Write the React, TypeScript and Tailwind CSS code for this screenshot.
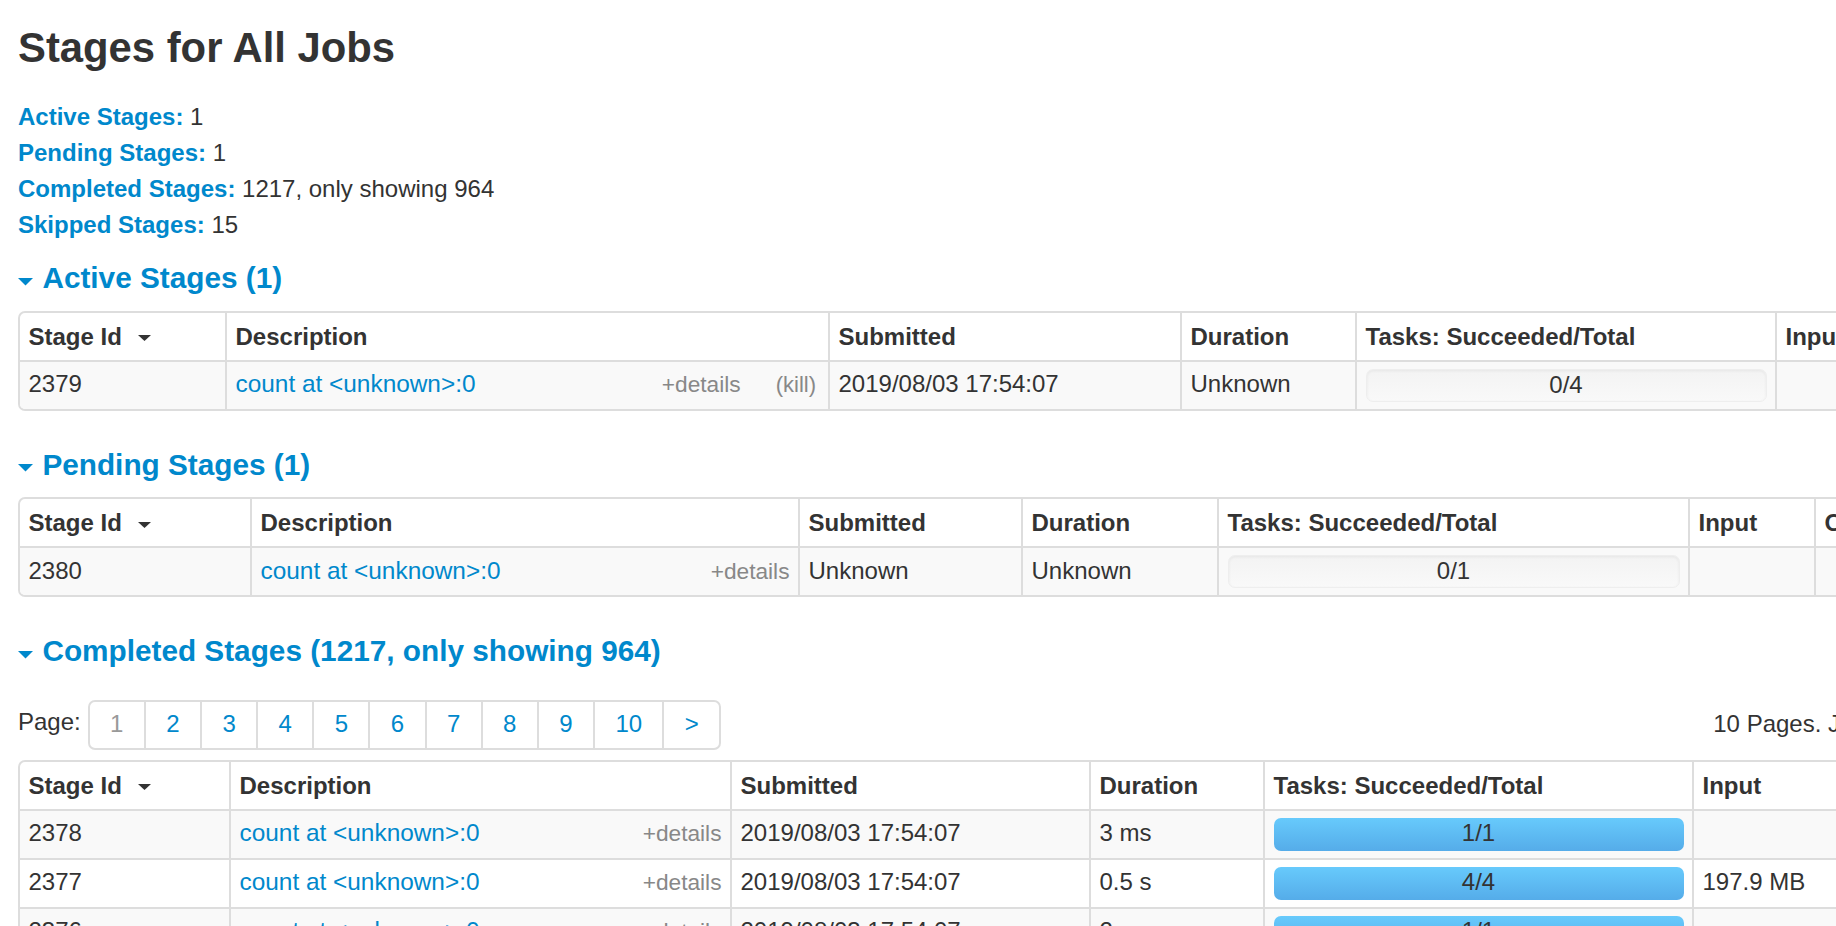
import React from 'react'

type Stage = {
    id: string
    submitted: string
    duration: string
    tasks: string
    done: boolean
    input?: string
    kill?: boolean
}

const headers = ['Stage Id', 'Description', 'Submitted', 'Duration', 'Tasks: Succeeded/Total', 'Input', 'Output']

const activeStages: Stage[] = [
    { id: '2379', submitted: '2019/08/03 17:54:07', duration: 'Unknown', tasks: '0/4', done: false, kill: true },
]

const pendingStages: Stage[] = [
    { id: '2380', submitted: 'Unknown', duration: 'Unknown', tasks: '0/1', done: false },
]

const completedStages: Stage[] = [
    { id: '2378', submitted: '2019/08/03 17:54:07', duration: '3 ms', tasks: '1/1', done: true },
    { id: '2377', submitted: '2019/08/03 17:54:07', duration: '0.5 s', tasks: '4/4', done: true, input: '197.9 MB' },
    { id: '2376', submitted: '2019/08/03 17:54:07', duration: '2 ms', tasks: '1/1', done: true },
]

const pages = ['1', '2', '3', '4', '5', '6', '7', '8', '9', '10', '>']

const Arrow = () => (
    <svg width="15" height="8" viewBox="0 0 15 8" className="mt-[18.5px] mr-[9.4px] shrink-0">
        <polygon points="0,0 15,0 7.5,7.5" fill="#0088cc" />
    </svg>
)

const SortArrow = () => (
    <svg width="13" height="6" viewBox="0 0 13 6" className="mt-[15.3px] ml-[16px] shrink-0">
        <polygon points="0,0 13,0 6.5,6" fill="#333" />
    </svg>
)

const SectionTitle = ({ text, className }: { text: string; className: string }) => (
    <div className={'flex h-[34px] items-start ' + className}>
        <Arrow />
        <a className="mt-[2px] whitespace-nowrap text-[29.75px] font-bold leading-[34px] text-[#0088cc]">{text}</a>
    </div>
)

const Progress = ({ text, done }: { text: string; done: boolean }) => {
    if (done) {
        return (
            <div className="mt-[7px] h-[33px] rounded-[7px] bg-gradient-to-b from-[#67cafc] to-[#55ace9] text-center leading-[29px] text-[#333]">
                {text}
            </div>
        )
    }
    return (
        <div className="mt-[7px] h-[33px] rounded-[7px] border border-[#eeeeee] bg-gradient-to-b from-[#f3f3f3] to-[#f9f9f9] text-center leading-[29px] text-[#333] shadow-[inset_0_1px_3px_rgba(0,0,0,0.06)]">
            {text}
        </div>
    )
}

const StageTable = ({ cols, stages, className }: { cols: string; stages: Stage[]; className: string }) => (
    <div className={'w-max overflow-hidden rounded-[7px] border-2 border-[#dddddd] ' + className}>
        {/* header row */}
        <div className={'grid h-[47px] ' + cols}>
            {headers.map((h, i) => (
                <div
                    key={h}
                    className={'flex items-start whitespace-nowrap px-[8.5px] pt-[7px] font-bold leading-[34px] ' + (i > 0 ? 'border-l-2 border-[#dddddd]' : '')}
                >
                    {h}
                    {i === 0 && <SortArrow />}
                </div>
            ))}
        </div>
        {stages.map((s, r) => (
            <div
                key={s.id}
                className={'grid h-[49px] border-t-2 border-[#dddddd] ' + cols + ' ' + (r % 2 === 0 ? 'bg-[#f9f9f9]' : 'bg-white')}
            >
                <div className="px-[8.5px] pt-[5.5px] leading-[34px]">{s.id}</div>
                <div className="flex items-baseline whitespace-nowrap border-l-2 border-[#dddddd] px-[8.5px] pt-[5.5px] leading-[34px]">
                    <a className="text-[24.4px] text-[#0088cc]">{'count at <unknown>:0'}</a>
                    <span className="ml-auto text-[22.7px] text-[#888888]">+details</span>
                    {s.kill && <span className="mr-[3.5px] ml-[35px] text-[22px] text-[#888888]">(kill)</span>}
                </div>
                <div className="whitespace-nowrap border-l-2 border-[#dddddd] px-[8.5px] pt-[5.5px] leading-[34px]">{s.submitted}</div>
                <div className="whitespace-nowrap border-l-2 border-[#dddddd] px-[8.5px] pt-[5.5px] leading-[34px]">{s.duration}</div>
                <div className="border-l-2 border-[#dddddd] px-[8.5px]">
                    <Progress text={s.tasks} done={s.done} />
                </div>
                <div className="whitespace-nowrap border-l-2 border-[#dddddd] px-[8.5px] pt-[5.5px] leading-[34px]">{s.input}</div>
                <div className="border-l-2 border-[#dddddd]"></div>
            </div>
        ))}
    </div>
)

const App = () => {
    return (
        <div className="h-[926px] w-[1836px] overflow-hidden bg-white pt-[13.5px] pl-[18px] font-['Liberation_Sans',Arial,Helvetica,sans-serif] text-[24px] text-[#333]">
            <h3 className="text-[41.8px] font-bold leading-[68px] text-[#333]">Stages for All Jobs</h3>

            <ul className="mt-[17px]">
                <li className="leading-[36.3px]"><a className="font-bold text-[#0088cc]">Active Stages:</a> 1</li>
                <li className="leading-[36.3px]"><a className="font-bold text-[#0088cc]">Pending Stages:</a> 1</li>
                <li className="leading-[36.3px]"><a className="font-bold text-[#0088cc]">Completed Stages:</a> 1217, only showing 964</li>
                <li className="leading-[36.3px]"><a className="font-bold text-[#0088cc]">Skipped Stages:</a> 15</li>
            </ul>

            <SectionTitle text="Active Stages (1)" className="mt-[15.7px]" />
            <StageTable
                className="mt-[17.3px]"
                cols="grid-cols-[205px_603px_352px_175px_420px_160px_160px]"
                stages={activeStages}
            />

            <SectionTitle text="Pending Stages (1)" className="mt-[35.3px]" />
            <StageTable
                className="mt-[17.3px]"
                cols="grid-cols-[230px_548px_223px_196px_471px_126px_160px]"
                stages={pendingStages}
            />

            <SectionTitle text="Completed Stages (1217, only showing 964)" className="mt-[35.1px]" />

            <div className="mt-[33.6px] flex h-[50px] items-start">
                <span className="mt-[4.7px] shrink-0 leading-[34px]">Page:</span>
                <ul className="ml-[7px] flex h-[50px] shrink-0 rounded-[7px] border-2 border-[#dddddd]">
                    {pages.map((p, i) => (
                        <li
                            key={p}
                            className={'flex items-center px-[20.4px] pb-[2px] leading-[34px] ' + (i > 0 ? 'border-l-2 border-[#dddddd] ' : '') + (i === 0 ? 'text-[#999999]' : 'text-[#0088cc]')}
                        >
                            {p}
                        </li>
                    ))}
                </ul>
                <span className="mt-[6.7px] ml-[992px] shrink-0 whitespace-nowrap leading-[34px]">10 Pages. Jump to</span>
            </div>

            <StageTable
                className="mt-[10px]"
                cols="grid-cols-[209px_501px_359px_174px_429px_160px_160px]"
                stages={completedStages}
            />
        </div>
    )
}

export default App
